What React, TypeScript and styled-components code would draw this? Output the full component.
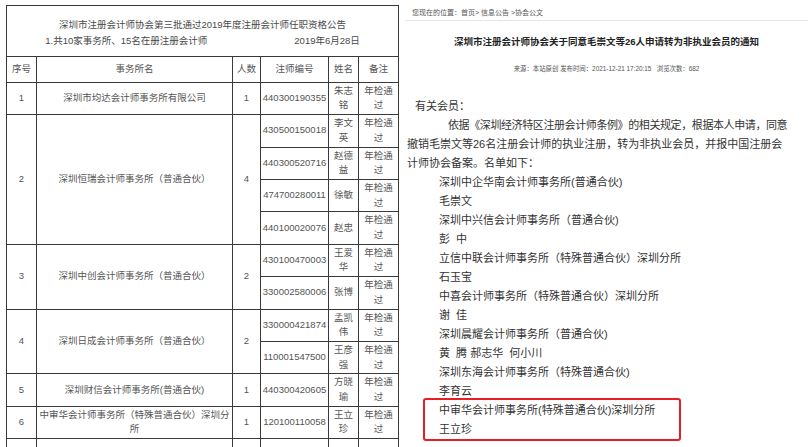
import React from "react";
import styled, { createGlobalStyle } from "styled-components";

const Global = createGlobalStyle`
  html, body {
    margin: 0;
    padding: 0;
    background: #ffffff;
    overflow: hidden;
  }
  * { box-sizing: border-box; }
`;

const FONT = `"Liberation Sans", "Noto Sans CJK SC", sans-serif`;

const Page = styled.div`
  display: flex;
  width: 808px;
  height: 447px;
  overflow: hidden;
  font-family: ${FONT};
`;

const LeftPane = styled.div`
  flex: none;
  width: 405px;
  padding: 5px 0 0 6px;
`;

const Table = styled.table`
  border-collapse: collapse;
  table-layout: fixed;
  width: 393px;
  font-size: 9.5px;
  color: #555;
  border: 1px solid #3a3a3a;
`;

const Cell = styled.td<{ $pad?: string; $nowrap?: boolean }>`
  border: 1px solid #3a3a3a;
  padding: ${(p) => p.$pad ?? "1px 2px"};
  line-height: 14.7px;
  text-align: center;
  vertical-align: middle;
  white-space: ${(p) => (p.$nowrap ? "nowrap" : "normal")};
`;

const HeadCell = styled.th`
  border: 1px solid #3a3a3a;
  padding: 5px 2px;
  line-height: 14.7px;
  font-weight: normal;
  text-align: center;
  color: #555;
`;

const TitleCell = styled.td`
  border: 1px solid #3a3a3a;
  padding: 11px 0 7px;
  text-align: center;
  line-height: 16px;
  color: #4a4a4a;
`;

const SubLine = styled.div`
  display: flex;
  justify-content: center;
  gap: 87px;
`;

const EmptyRow = styled.tr`
  height: 32px;
`;

const RightPane = styled.div`
  flex: 1;
  display: flex;
  flex-direction: column;
  font-family: ${FONT};
`;

const Crumb = styled.div`
  padding: 8px 0 2px 7px;
  font-size: 7px;
  line-height: 10px;
  color: #555;
  border-bottom: 1px solid #e6e6e6;
`;

const NoticeTitle = styled.h1`
  margin: 14px 0 0;
  font-size: 9.5px;
  line-height: 14px;
  font-weight: bold;
  color: #222;
  text-align: center;
`;

const Meta = styled.div`
  margin-top: 15px;
  font-size: 6.4px;
  line-height: 10px;
  color: #555;
  text-align: center;
  white-space: pre;
`;

const Body = styled.div`
  margin: 23px 0 0 2px;
  width: 400px;
  font-size: 11px;
  line-height: 19px;
  color: #333;
`;

const Salutation = styled.div`
  padding-left: 8px;
`;

const Para = styled.p`
  margin: 0;
  text-indent: 41px;
  white-space: nowrap;
`;

const Tight = styled.span`
  letter-spacing: -0.4px;
`;

const List = styled.div`
  padding-left: 32px;
`;

const Item = styled.div`
  white-space: pre;
`;

const Highlight = styled.div`
  position: relative;
  &::after {
    content: "";
    position: absolute;
    left: -16px;
    top: -3px;
    width: 254px;
    height: 39px;
    border: 2px solid #ea1c24;
    border-radius: 3px;
    pointer-events: none;
  }
`;

type Person = { no: string; name: string };
type Firm = { idx: string; firm: string; count: string; people: Person[] };

const firms: Firm[] = [
  { idx: "1", firm: "深圳市均达会计师事务所有限公司", count: "1", people: [{ no: "440300190355", name: "朱志铭" }] },
  {
    idx: "2",
    firm: "深圳恒瑞会计师事务所（普通合伙）",
    count: "4",
    people: [
      { no: "430500150018", name: "李文英" },
      { no: "440300520716", name: "赵德益" },
      { no: "474700280011", name: "徐敏" },
      { no: "440100020076", name: "赵忠" },
    ],
  },
  {
    idx: "3",
    firm: "深圳中创会计师事务所（普通合伙）",
    count: "2",
    people: [
      { no: "430100470003", name: "王爱华" },
      { no: "330002580006", name: "张博" },
    ],
  },
  {
    idx: "4",
    firm: "深圳日成会计师事务所（普通合伙）",
    count: "2",
    people: [
      { no: "330000421874", name: "孟凯伟" },
      { no: "110001547500", name: "王彦强" },
    ],
  },
  { idx: "5", firm: "深圳财信会计师事务所(普通合伙)", count: "1", people: [{ no: "440300420605", name: "方晓瑜" }] },
  { idx: "6", firm: "中审华会计师事务所（特殊普通合伙）深圳分所", count: "1", people: [{ no: "120100110058", name: "王立珍" }] },
];

const listItems = [
  "深圳中企华南会计师事务所(普通合伙)",
  "毛崇文",
  "深圳中兴信会计师事务所（普通合伙)",
  "彭  中",
  "立信中联会计师事务所（特殊普通合伙）深圳分所",
  "石玉宝",
  "中喜会计师事务所（特殊普通合伙）深圳分所",
  "谢  佳",
  "深圳晨耀会计师事务所（普通合伙)",
  "黄  腾 郝志华  何小川",
  "深圳东海会计师事务所（特殊普通合伙)",
  "李育云",
];

function LeftTable() {
  return (
    <Table>
      <colgroup>
        <col style={{ width: 30 }} />
        <col style={{ width: 196 }} />
        <col style={{ width: 28 }} />
        <col style={{ width: 68 }} />
        <col style={{ width: 30 }} />
        <col style={{ width: 40 }} />
      </colgroup>
      <tbody>
        <tr>
          <TitleCell colSpan={6}>
            <div>深圳市注册会计师协会第三批通过2019年度注册会计师任职资格公告</div>
            <SubLine>
              <span>1.共10家事务所、15名在册注册会计师</span>
              <span>2019年6月28日</span>
            </SubLine>
          </TitleCell>
        </tr>
        <tr>
          <HeadCell>序号</HeadCell>
          <HeadCell>事务所名</HeadCell>
          <HeadCell>人数</HeadCell>
          <HeadCell>注师编号</HeadCell>
          <HeadCell>姓名</HeadCell>
          <HeadCell>备注</HeadCell>
        </tr>
        {firms.map((f) =>
          f.people.map((p, i) => (
            <tr key={f.idx + p.no}>
              {i === 0 && (
                <>
                  <Cell rowSpan={f.people.length}>{f.idx}</Cell>
                  <Cell rowSpan={f.people.length} $pad="1px 1px">
                    {f.firm}
                  </Cell>
                  <Cell rowSpan={f.people.length}>{f.count}</Cell>
                </>
              )}
              <Cell $pad="1px 1px" $nowrap>
                {p.no}
              </Cell>
              <Cell>{p.name}</Cell>
              <Cell>年检通过</Cell>
            </tr>
          ))
        )}
        <EmptyRow>
          <Cell />
          <Cell />
          <Cell />
          <Cell />
          <Cell />
          <Cell />
        </EmptyRow>
      </tbody>
    </Table>
  );
}

function Notice() {
  return (
    <RightPane>
      <Crumb>您现在的位置：首页&gt; 信息公告 &gt;协会公文</Crumb>
      <NoticeTitle>深圳市注册会计师协会关于同意毛崇文等26人申请转为非执业会员的通知</NoticeTitle>
      <Meta>{"来源：本站原创 发布时间：2021-12-21 17:20:15   浏览次数：682"}</Meta>
      <Body>
        <Salutation>有关会员：</Salutation>
        <Para>
          <Tight>依据《深圳经济特区注册会计师条例》的相关规定，根据本人申请，同意</Tight>
          <br />
          撤销毛崇文等26名注册会计师的执业注册，转为非执业会员，并报中国注册会
          <br />
          计师协会备案。名单如下：
        </Para>
        <List>
          {listItems.map((t) => (
            <Item key={t}>{t}</Item>
          ))}
          <Highlight>
            <Item>中审华会计师事务所(特殊普通合伙)深圳分所</Item>
            <Item>王立珍</Item>
          </Highlight>
        </List>
      </Body>
    </RightPane>
  );
}

export default function App() {
  return (
    <>
      <Global />
      <Page>
        <LeftPane>
          <LeftTable />
        </LeftPane>
        <Notice />
      </Page>
    </>
  );
}
